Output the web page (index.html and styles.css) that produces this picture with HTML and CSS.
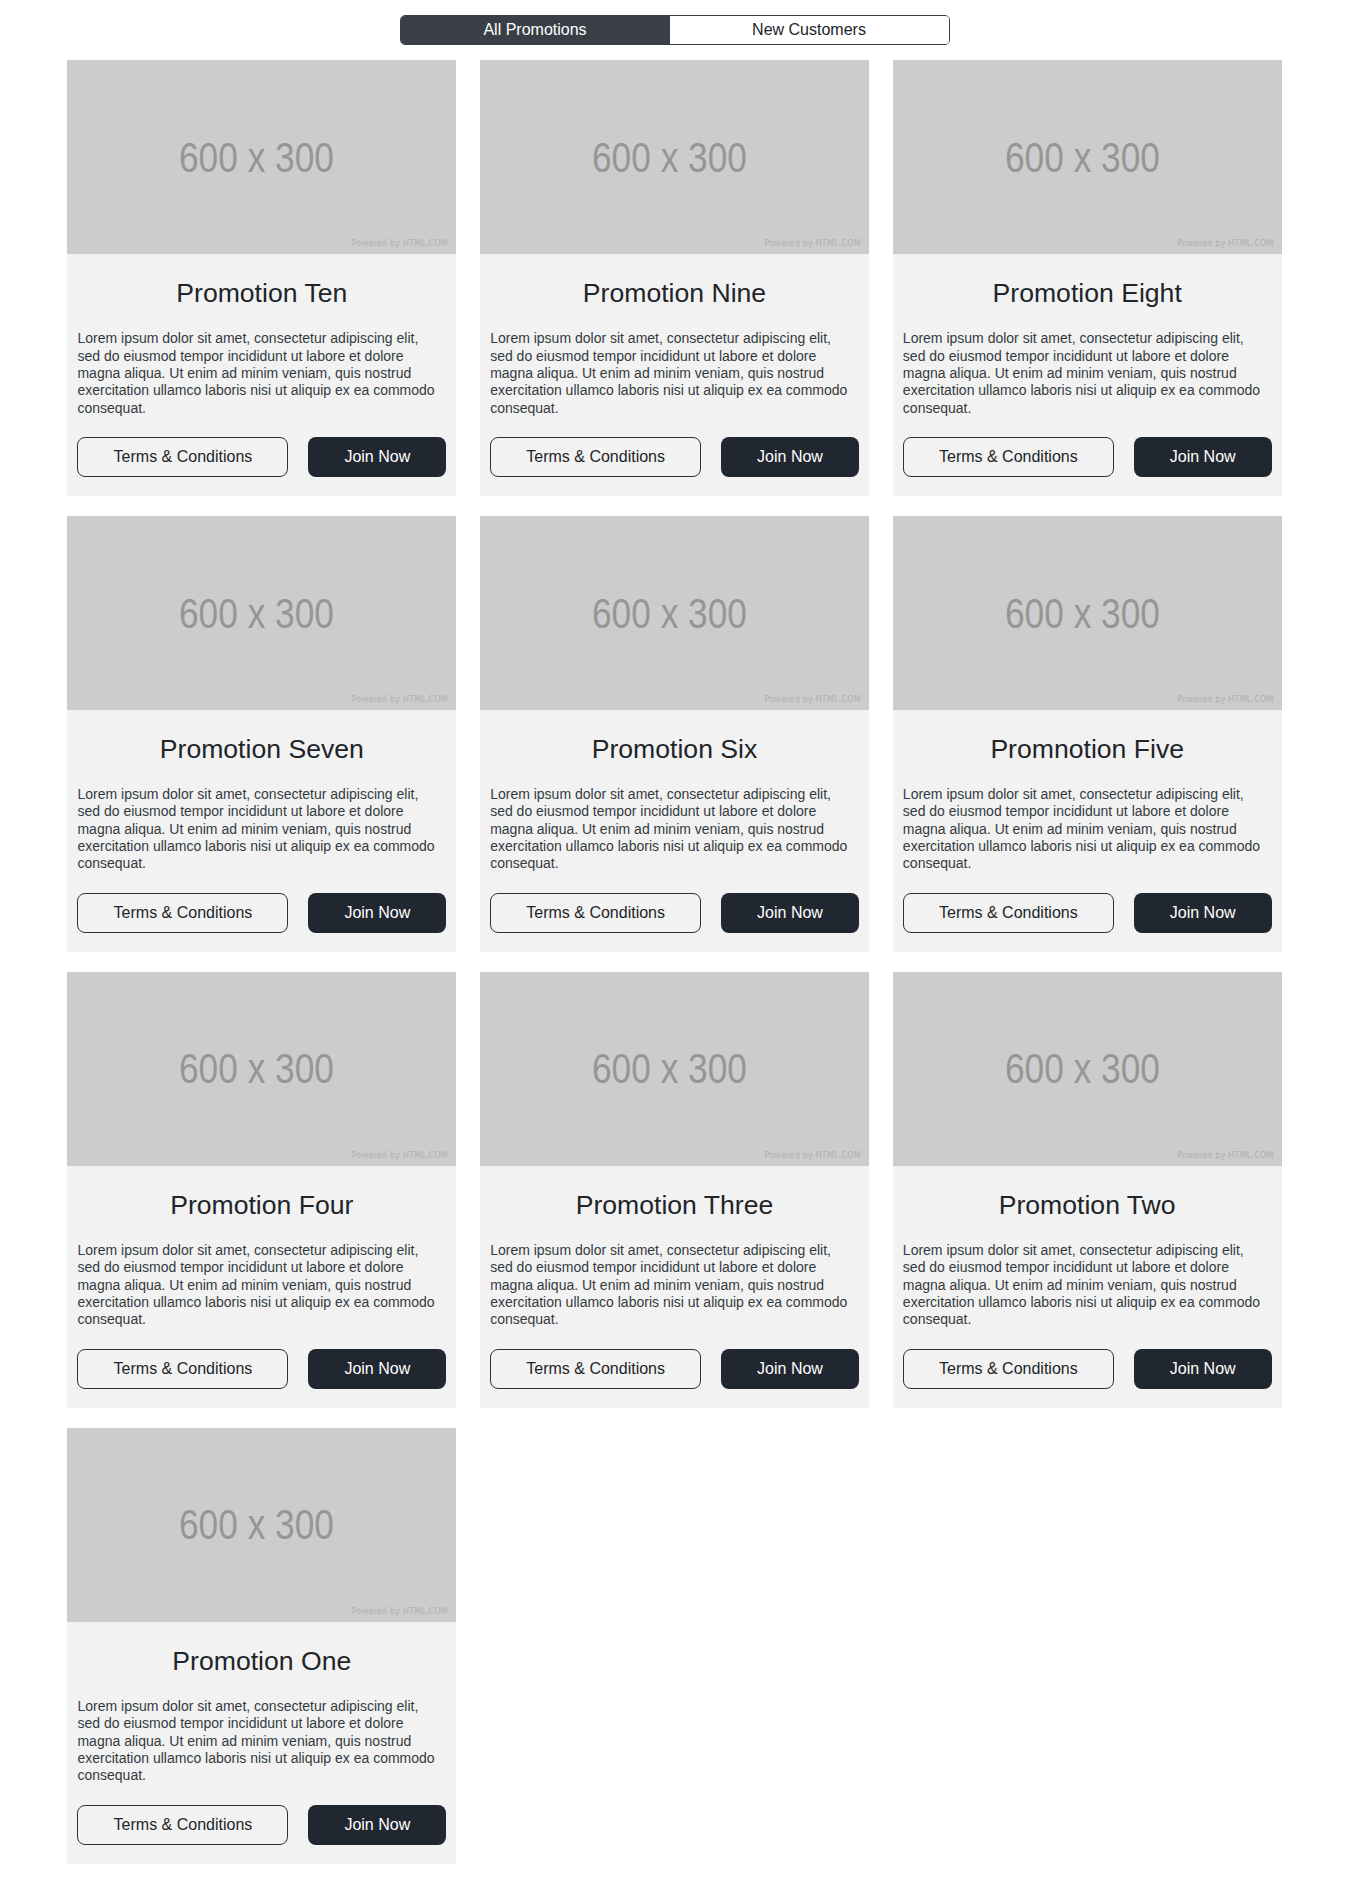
FILE: index.html
```html
<!DOCTYPE html>
<html lang="en">
<head>
<meta charset="utf-8">
<title>Promotions</title>
<link rel="stylesheet" href="styles.css">
</head>
<body>
<div class="page">
  <div class="tabs">
    <button class="tab active">All Promotions</button>
    <button class="tab">New Customers</button>
  </div>
  <div class="grid">
    <div class="card">
      <div class="img"><span class="size">600 x 300</span><span class="powered">Powered by HTML.COM</span></div>
      <div class="body">
        <h3 class="title">Promotion Ten</h3>
        <p class="text">Lorem ipsum dolor sit amet, consectetur adipiscing elit, sed do eiusmod tempor incididunt ut labore et dolore magna aliqua. Ut enim ad minim veniam, quis nostrud exercitation ullamco laboris nisi ut aliquip ex ea commodo consequat.</p>
        <div class="actions"><button class="btn terms">Terms &amp; Conditions</button><button class="btn join">Join Now</button></div>
      </div>
    </div>
    <div class="card">
      <div class="img"><span class="size">600 x 300</span><span class="powered">Powered by HTML.COM</span></div>
      <div class="body">
        <h3 class="title">Promotion Nine</h3>
        <p class="text">Lorem ipsum dolor sit amet, consectetur adipiscing elit, sed do eiusmod tempor incididunt ut labore et dolore magna aliqua. Ut enim ad minim veniam, quis nostrud exercitation ullamco laboris nisi ut aliquip ex ea commodo consequat.</p>
        <div class="actions"><button class="btn terms">Terms &amp; Conditions</button><button class="btn join">Join Now</button></div>
      </div>
    </div>
    <div class="card">
      <div class="img"><span class="size">600 x 300</span><span class="powered">Powered by HTML.COM</span></div>
      <div class="body">
        <h3 class="title">Promotion Eight</h3>
        <p class="text">Lorem ipsum dolor sit amet, consectetur adipiscing elit, sed do eiusmod tempor incididunt ut labore et dolore magna aliqua. Ut enim ad minim veniam, quis nostrud exercitation ullamco laboris nisi ut aliquip ex ea commodo consequat.</p>
        <div class="actions"><button class="btn terms">Terms &amp; Conditions</button><button class="btn join">Join Now</button></div>
      </div>
    </div>
    <div class="card">
      <div class="img"><span class="size">600 x 300</span><span class="powered">Powered by HTML.COM</span></div>
      <div class="body">
        <h3 class="title">Promotion Seven</h3>
        <p class="text">Lorem ipsum dolor sit amet, consectetur adipiscing elit, sed do eiusmod tempor incididunt ut labore et dolore magna aliqua. Ut enim ad minim veniam, quis nostrud exercitation ullamco laboris nisi ut aliquip ex ea commodo consequat.</p>
        <div class="actions"><button class="btn terms">Terms &amp; Conditions</button><button class="btn join">Join Now</button></div>
      </div>
    </div>
    <div class="card">
      <div class="img"><span class="size">600 x 300</span><span class="powered">Powered by HTML.COM</span></div>
      <div class="body">
        <h3 class="title">Promotion Six</h3>
        <p class="text">Lorem ipsum dolor sit amet, consectetur adipiscing elit, sed do eiusmod tempor incididunt ut labore et dolore magna aliqua. Ut enim ad minim veniam, quis nostrud exercitation ullamco laboris nisi ut aliquip ex ea commodo consequat.</p>
        <div class="actions"><button class="btn terms">Terms &amp; Conditions</button><button class="btn join">Join Now</button></div>
      </div>
    </div>
    <div class="card">
      <div class="img"><span class="size">600 x 300</span><span class="powered">Powered by HTML.COM</span></div>
      <div class="body">
        <h3 class="title">Promnotion Five</h3>
        <p class="text">Lorem ipsum dolor sit amet, consectetur adipiscing elit, sed do eiusmod tempor incididunt ut labore et dolore magna aliqua. Ut enim ad minim veniam, quis nostrud exercitation ullamco laboris nisi ut aliquip ex ea commodo consequat.</p>
        <div class="actions"><button class="btn terms">Terms &amp; Conditions</button><button class="btn join">Join Now</button></div>
      </div>
    </div>
    <div class="card">
      <div class="img"><span class="size">600 x 300</span><span class="powered">Powered by HTML.COM</span></div>
      <div class="body">
        <h3 class="title">Promotion Four</h3>
        <p class="text">Lorem ipsum dolor sit amet, consectetur adipiscing elit, sed do eiusmod tempor incididunt ut labore et dolore magna aliqua. Ut enim ad minim veniam, quis nostrud exercitation ullamco laboris nisi ut aliquip ex ea commodo consequat.</p>
        <div class="actions"><button class="btn terms">Terms &amp; Conditions</button><button class="btn join">Join Now</button></div>
      </div>
    </div>
    <div class="card">
      <div class="img"><span class="size">600 x 300</span><span class="powered">Powered by HTML.COM</span></div>
      <div class="body">
        <h3 class="title">Promotion Three</h3>
        <p class="text">Lorem ipsum dolor sit amet, consectetur adipiscing elit, sed do eiusmod tempor incididunt ut labore et dolore magna aliqua. Ut enim ad minim veniam, quis nostrud exercitation ullamco laboris nisi ut aliquip ex ea commodo consequat.</p>
        <div class="actions"><button class="btn terms">Terms &amp; Conditions</button><button class="btn join">Join Now</button></div>
      </div>
    </div>
    <div class="card">
      <div class="img"><span class="size">600 x 300</span><span class="powered">Powered by HTML.COM</span></div>
      <div class="body">
        <h3 class="title">Promotion Two</h3>
        <p class="text">Lorem ipsum dolor sit amet, consectetur adipiscing elit, sed do eiusmod tempor incididunt ut labore et dolore magna aliqua. Ut enim ad minim veniam, quis nostrud exercitation ullamco laboris nisi ut aliquip ex ea commodo consequat.</p>
        <div class="actions"><button class="btn terms">Terms &amp; Conditions</button><button class="btn join">Join Now</button></div>
      </div>
    </div>
    <div class="card">
      <div class="img"><span class="size">600 x 300</span><span class="powered">Powered by HTML.COM</span></div>
      <div class="body">
        <h3 class="title">Promotion One</h3>
        <p class="text">Lorem ipsum dolor sit amet, consectetur adipiscing elit, sed do eiusmod tempor incididunt ut labore et dolore magna aliqua. Ut enim ad minim veniam, quis nostrud exercitation ullamco laboris nisi ut aliquip ex ea commodo consequat.</p>
        <div class="actions"><button class="btn terms">Terms &amp; Conditions</button><button class="btn join">Join Now</button></div>
      </div>
    </div>
  </div>
</div>
</body>
</html>
```
FILE: styles.css
```css
* { box-sizing: border-box; }

body {
  margin: 0;
  background: #ffffff;
  font-family: "Liberation Sans", Arial, sans-serif;
  color: #212529;
}

.page {
  width: 90%;
  margin: 0 auto;
  padding: 15px 0 20px;
}

.tabs {
  display: flex;
  width: 550px;
  height: 30px;
  margin: 0 auto;
  border: 1px solid #3a3f47;
  border-radius: 5px;
  overflow: hidden;
}

.tab {
  flex: 0 0 269px;
  padding: 0;
  border: none;
  background: #ffffff;
  font-family: "Liberation Sans", Arial, sans-serif;
  font-size: 16px;
  line-height: 28px;
  color: #212529;
  cursor: pointer;
}

.tab + .tab { flex: 1 1 auto; }

.tab.active {
  background: #3a3f47;
  color: #ffffff;
}

.grid {
  display: grid;
  grid-template-columns: repeat(3, 1fr);
  column-gap: 24px;
  row-gap: 20px;
  margin-top: 15px;
}

.card {
  background: #f2f2f2;
}

.img {
  position: relative;
  aspect-ratio: 2 / 1;
  background: #cccccc;
  display: flex;
  align-items: center;
  justify-content: center;
  padding-right: 10px;
}

.size {
  display: inline-block;
  font-family: "Liberation Sans", Arial, sans-serif;
  font-size: 43px;
  line-height: 1;
  color: #969696;
  transform: scaleX(0.82);
  white-space: nowrap;
}

.powered {
  position: absolute;
  right: 8px;
  bottom: 6px;
  font-family: "DejaVu Sans", sans-serif;
  font-size: 8px;
  letter-spacing: 0.2px;
  color: #b0b0b0;
  white-space: nowrap;
}

.body {
  padding: 24px 10px 19px;
}

.title {
  margin: 0 0 20px;
  font-size: 26.6px;
  line-height: 1.2;
  font-weight: 400;
  text-align: center;
  color: #212529;
}

.text {
  margin: 0 6px 20px 0;
  font-size: 14px;
  line-height: 17.33px;
  color: #343a40;
}

.actions {
  display: flex;
  gap: 20px;
}

.btn {
  height: 40px;
  border-radius: 8px;
  font-family: "Liberation Sans", Arial, sans-serif;
  font-size: 16px;
  cursor: pointer;
}

.terms {
  flex: 0 0 211px;
  background: transparent;
  border: 1px solid #2e333b;
  color: #212529;
}

.join {
  flex: 1 1 auto;
  background: #212730;
  border: none;
  color: #ffffff;
}
```
